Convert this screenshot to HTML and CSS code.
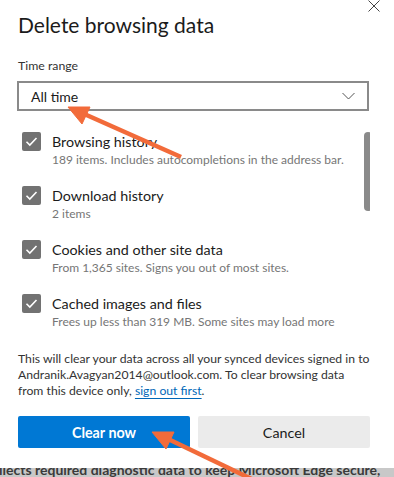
FILE: index.html
```html
<!DOCTYPE html>
<html lang="en">
<head>
<meta charset="utf-8">
<title>Delete browsing data</title>
<link rel="stylesheet" href="styles.css">
</head>
<body>
<div class="page">
  <div class="dialog">
    <div class="header">
      <h1 class="title">Delete browsing data</h1>
      <svg class="close" width="12" height="12" viewBox="0 0 12 12"><path d="M0.5 0.5 L11.5 11.5 M11.5 0.5 L0.5 11.5" stroke="#444" stroke-width="1" fill="none"/></svg>
    </div>
    <div class="label">Time range</div>
    <div class="select">
      <span class="select-value">All time</span>
      <svg class="chevron" width="13" height="8" viewBox="0 0 13 8"><path d="M0.5 1 L6.5 7 L12.5 1" stroke="#555" stroke-width="1" fill="none"/></svg>
    </div>
    <div class="list-wrap">
      <div class="list">
        <div class="item">
          <span class="check"><svg width="19" height="19" viewBox="0 0 19 19"><path d="M4.5 9.8 L7.8 13 L14.5 6" stroke="#fff" stroke-width="1.6" fill="none"/></svg></span>
          <div class="item-text">
            <div class="item-title">Browsing history</div>
            <div class="item-sub">189 items. Includes autocompletions in the address bar.</div>
          </div>
        </div>
        <div class="item">
          <span class="check"><svg width="19" height="19" viewBox="0 0 19 19"><path d="M4.5 9.8 L7.8 13 L14.5 6" stroke="#fff" stroke-width="1.6" fill="none"/></svg></span>
          <div class="item-text">
            <div class="item-title">Download history</div>
            <div class="item-sub">2 items</div>
          </div>
        </div>
        <div class="item">
          <span class="check"><svg width="19" height="19" viewBox="0 0 19 19"><path d="M4.5 9.8 L7.8 13 L14.5 6" stroke="#fff" stroke-width="1.6" fill="none"/></svg></span>
          <div class="item-text">
            <div class="item-title">Cookies and other site data</div>
            <div class="item-sub">From 1,365 sites. Signs you out of most sites.</div>
          </div>
        </div>
        <div class="item">
          <span class="check"><svg width="19" height="19" viewBox="0 0 19 19"><path d="M4.5 9.8 L7.8 13 L14.5 6" stroke="#fff" stroke-width="1.6" fill="none"/></svg></span>
          <div class="item-text">
            <div class="item-title">Cached images and files</div>
            <div class="item-sub">Frees up less than 319 MB. Some sites may load more</div>
          </div>
        </div>
      </div>
      <div class="scrollbar"></div>
    </div>
    <p class="note">This will clear your data across all your synced devices signed in to<br>Andranik.Avagyan2014@outlook.com. To clear browsing data<br>from this device only, <a class="link" href="#">sign out first</a>.</p>
    <div class="buttons">
      <button class="btn btn-primary">Clear now</button>
      <button class="btn btn-secondary">Cancel</button>
    </div>
  </div>
  <div class="behind"><span class="behind-text">llects required diagnostic data to keep Microsoft Edge secure,</span></div>
  <svg class="arrows" width="394" height="477" viewBox="0 0 394 477">
    <g fill="#f26b3a" stroke="#f26b3a">
      <line x1="181" y1="157" x2="82" y2="113" stroke-width="4.5"/>
      <polygon points="68,107 90,107 82,124" stroke-width="1"/>
      <line x1="262" y1="484" x2="166" y2="438" stroke-width="4.5"/>
      <polygon points="152,432 174,432 166,449" stroke-width="1"/>
    </g>
  </svg>
</div>
</body>
</html>
```
FILE: styles.css
```css
* { box-sizing: border-box; }
html, body { margin: 0; padding: 0; background: #fff; }
body {
  font-family: "Lato", "Noto Sans", sans-serif;
  color: #1b1b1b;
  width: 394px;
  height: 477px;
  overflow: hidden;
}
.page {
  position: relative;
  width: 394px;
  height: 477px;
  display: flex;
  flex-direction: column;
}
.dialog {
  padding: 0 24px 0 18px;
  flex: 1;
  display: flex;
  flex-direction: column;
}
.header {
  display: flex;
  justify-content: space-between;
  align-items: flex-start;
  margin-right: -10px;
}
.title {
  margin: 11px 0 0 0;
  font-size: 21px;
  line-height: 28px;
  font-weight: 400;
  color: #1b1b1b;
}
.close { display: block; margin-top: 0; }
.label {
  margin-top: 19px;
  font-size: 12.3px;
  line-height: 16px;
  color: #333;
}
.select {
  margin: 7px 1px 0 -1px;
  height: 30px;
  border: 2px solid #8a8a8a;
  display: flex;
  align-items: center;
  justify-content: space-between;
  padding: 0 12px 0 12px;
  flex: none;
}
.select-value { font-size: 14px; color: #1b1b1b; }
.chevron { display: block; }
.list-wrap {
  margin-top: 21px;
  display: flex;
  justify-content: space-between;
  height: 203px;
  overflow: hidden;
  flex: none;
}
.list {
  display: flex;
  flex-direction: column;
  gap: 18px;
}
.item {
  display: flex;
  align-items: flex-start;
  gap: 11px;
  padding-left: 4px;
  height: 36px;
}
.check {
  width: 19px;
  height: 19px;
  background: #727272;
  border-radius: 2px;
  display: block;
  flex: none;
}
.check svg { display: block; }
.item-title {
  font-size: 14.3px;
  line-height: 19px;
  color: #1b1b1b;
}
.item-sub {
  font-size: 12px;
  line-height: 17px;
  color: #767676;
  white-space: nowrap;
}
.scrollbar {
  width: 8px;
  height: 79px;
  background: #8a8a8a;
  border-radius: 4px;
  margin-right: -2px;
  flex: none;
}
.note {
  margin: 16px 0 0 0;
  font-size: 12.2px;
  line-height: 16px;
  color: #333;
  white-space: nowrap;
}
.link {
  color: #0067b8;
  text-decoration: underline;
  text-underline-offset: 3px;
}
.buttons {
  margin-top: 17px;
  display: flex;
  gap: 8px;
}
.btn {
  flex: 1;
  height: 32px;
  border: none;
  border-radius: 2px;
  font-family: inherit;
  font-size: 14.3px;
}
.btn-primary { background: #0078d4; color: #fff; font-weight: 700; }
.btn-secondary { background: #ebebeb; color: #1b1b1b; }
.behind {
  height: 9px;
  background: #c8c8c8;
  overflow: hidden;
  flex: none;
}
.behind-text {
  display: block;
  margin-top: -6px;
  font-size: 14px;
  line-height: 16px;
  font-weight: 700;
  color: #3a3a3a;
  white-space: nowrap;
  margin-left: -1px;
}
.arrows {
  position: absolute;
  left: 0;
  top: 0;
  pointer-events: none;
}
```
